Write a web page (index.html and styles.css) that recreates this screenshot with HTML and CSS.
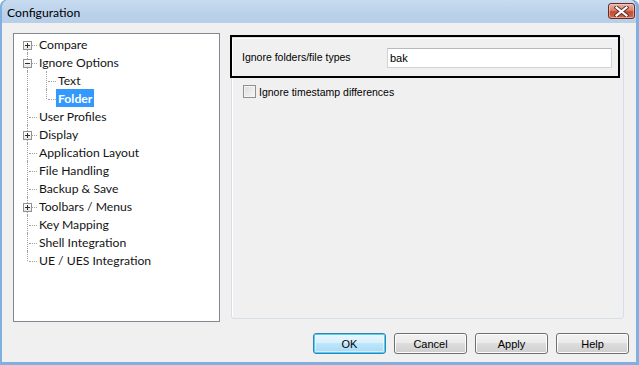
FILE: index.html
```html
<!DOCTYPE html>
<html>
<head>
<meta charset="utf-8">
<title>Configuration</title>
<link rel="stylesheet" href="styles.css">
</head>
<body>
<div class="window">
  <div class="titlebar">
    <span class="title">Configuration</span>
    <span class="close">
      <svg width="15" height="11" viewBox="0 0 15 11">
        <path d="M2.5 1.5 L12.5 9.5 M12.5 1.5 L2.5 9.5" stroke="#5a2a22" stroke-width="4" stroke-linecap="square"/>
        <path d="M2.5 1.5 L12.5 9.5 M12.5 1.5 L2.5 9.5" stroke="#ffffff" stroke-width="2.2" stroke-linecap="square"/>
      </svg>
    </span>
  </div>
  <div class="client">
    <div class="main">
      <div class="tree">
        <div class="row"><span class="g first"><span class="exp plus"></span></span><span class="lbl">Compare</span></div>
        <div class="row"><span class="g tee"><span class="exp minus"></span></span><span class="lbl">Ignore Options</span></div>
        <div class="row"><span class="g line"></span><span class="g l2 tee"></span><span class="lbl">Text</span></div>
        <div class="row"><span class="g line"></span><span class="g l2 last"></span><span class="lbl sel">Folder</span></div>
        <div class="row"><span class="g tee"></span><span class="lbl">User Profiles</span></div>
        <div class="row"><span class="g tee"><span class="exp plus"></span></span><span class="lbl">Display</span></div>
        <div class="row"><span class="g tee"></span><span class="lbl">Application Layout</span></div>
        <div class="row"><span class="g tee"></span><span class="lbl">File Handling</span></div>
        <div class="row"><span class="g tee"></span><span class="lbl">Backup &amp; Save</span></div>
        <div class="row"><span class="g tee"><span class="exp plus"></span></span><span class="lbl">Toolbars / Menus</span></div>
        <div class="row"><span class="g tee"></span><span class="lbl">Key Mapping</span></div>
        <div class="row"><span class="g tee"></span><span class="lbl">Shell Integration</span></div>
        <div class="row"><span class="g last"></span><span class="lbl">UE / UES Integration</span></div>
      </div>
      <div class="page">
        <div class="group">
          <div class="focus-rect">
            <span class="field-label">Ignore folders/file types</span>
            <span class="input">bak</span>
          </div>
          <div class="check-row">
            <span class="checkbox"></span>
            <span class="check-label">Ignore timestamp differences</span>
          </div>
        </div>
      </div>
    </div>
    <div class="buttons">
      <span class="btn default">OK</span>
      <span class="btn">Cancel</span>
      <span class="btn">Apply</span>
      <span class="btn">Help</span>
    </div>
  </div>
</div>
</body>
</html>
```
FILE: styles.css
```css
html, body {
  margin: 0;
  padding: 0;
  background: #ffffff;
}

.window {
  width: 639px;
  height: 365px;
  box-sizing: border-box;
  display: flex;
  flex-direction: column;
  background: #b9d1ea;
  border-left: 2px solid #7fb0df;
  border-right: 3px solid #7fb0df;
  border-bottom: 3px solid #7fb0df;
  box-shadow: inset 1px 0 0 #3b6ea3, inset -1px 0 0 #3b6ea3, inset 0 -1px 0 #3b6ea3;
  border-radius: 6px 6px 0 0;
  font-family: "Liberation Sans", Arial, sans-serif;
  font-size: 10.5px;
  color: #000;
}

.titlebar {
  height: 23px;
  flex: none;
  display: flex;
  align-items: center;
  justify-content: space-between;
  padding: 0 1px 0 5px;
  background: linear-gradient(#c9dcf0, #b9d1ea 60%, #b7cfe9);
  border-radius: 6px 6px 0 0;
}

.title {
  font-family: "Lato", "Open Sans", sans-serif;
  font-size: 12.2px;
  color: #000;
  margin-top: 1px;
}

.close {
  width: 27px;
  height: 16px;
  box-sizing: border-box;
  border: 1px solid #6b2b24;
  border-radius: 3px;
  background: linear-gradient(#e9b2a6, #d88570 45%, #c34a32 55%, #cf6a4e);
  box-shadow: inset 0 0 0 1px rgba(255, 220, 210, 0.5);
  display: flex;
  align-items: center;
  justify-content: center;
  margin-top: -1px;
}

.client {
  flex: 1;
  display: flex;
  flex-direction: column;
  background: #f0f0f0;
}

.main {
  display: flex;
  gap: 11px;
  padding: 10px 12px 0 11px;
}

.tree {
  width: 207px;
  height: 289px;
  box-sizing: border-box;
  border: 1px solid #828790;
  background: #fff;
  padding-top: 1px;
  font-family: "Lato", "Open Sans", sans-serif;
  font-size: 12.2px;
}

.row {
  display: flex;
  height: 18px;
}

.g {
  position: relative;
  width: 23px;
  flex: none;
}

.g.l2 {
  width: 19px;
}

.g::before {
  content: "";
  position: absolute;
  left: 13px;
  top: 0;
  bottom: 0;
  border-left: 1px dotted #a0a0a0;
}

.g.l2::before {
  left: 9px;
}

.g.first::before {
  top: 10px;
}

.g.last::before {
  bottom: 8px;
}

.g.tee::after,
.g.first::after,
.g.last::after {
  content: "";
  position: absolute;
  left: 15px;
  right: 0;
  top: 10px;
  border-top: 1px dotted #a0a0a0;
}

.g.l2.tee::after,
.g.l2.last::after {
  left: 11px;
}

.exp {
  position: absolute;
  left: 9px;
  top: 6px;
  width: 9px;
  height: 9px;
  box-sizing: border-box;
  border: 1px solid #919191;
  background: linear-gradient(#ffffff, #e6e6e6);
  z-index: 1;
}

.exp::before {
  content: "";
  position: absolute;
  left: 1px;
  top: 3px;
  width: 5px;
  height: 1px;
  background: #2e2e2e;
}

.exp.plus::after {
  content: "";
  position: absolute;
  left: 3px;
  top: 1px;
  width: 1px;
  height: 5px;
  background: #2e2e2e;
}

.lbl {
  line-height: 19px;
  height: 18px;
  padding: 0 2px;
  white-space: nowrap;
  color: #141414;
}

.lbl.sel {
  background: #3399ff;
  color: #fff;
  font-weight: bold;
}

.page {
  flex: 1;
  padding-top: 4px;
  padding-bottom: 3px;
  display: flex;
}

.group {
  flex: 1;
  border: 1px solid #d5dfe5;
  border-radius: 3px;
  box-shadow: inset 1px 1px 0 #ffffff;
}

.focus-rect {
  display: flex;
  align-items: flex-start;
  margin: -3px 3px 0 -2px;
  height: 43px;
  box-sizing: border-box;
  border: 2px solid #000;
  padding: 11px 6px 0 10px;
}

.field-label {
  flex: 1;
  line-height: 14px;
  margin-top: 2px;
  white-space: nowrap;
}

.input {
  width: 225px;
  height: 20px;
  box-sizing: border-box;
  border: 1px solid #cfd3d8;
  border-top-color: #b5b9be;
  background: #fff;
  padding-left: 2px;
  line-height: 18px;
  font-size: 11px;
}

.check-row {
  display: flex;
  align-items: center;
  margin: 7px 0 0 11px;
  gap: 3px;
}

.checkbox {
  width: 13px;
  height: 13px;
  box-sizing: border-box;
  border: 1px solid #8e8f8f;
  background: linear-gradient(135deg, #dcdcdc, #f7f7f7);
  box-shadow: inset 0 0 0 1px #f4f4f4;
}

.check-label {
  white-space: nowrap;
}

.buttons {
  display: flex;
  justify-content: flex-end;
  gap: 8px;
  margin-top: 11px;
  padding-right: 7px;
}

.btn {
  width: 73px;
  height: 21px;
  box-sizing: border-box;
  border: 1px solid #707070;
  border-radius: 3px;
  background: linear-gradient(#f2f2f2, #ebebeb 45%, #dddddd 50%, #cfcfcf);
  box-shadow: inset 0 0 0 1px #fcfcfc;
  display: flex;
  align-items: center;
  justify-content: center;
  color: #000;
  font-size: 11px;
}

.btn.default {
  border-color: #3c7fb1;
  background: linear-gradient(#eaf6fd, #d9f0fc 45%, #bee6fd 50%, #a7d9f5);
  box-shadow: inset 0 0 0 1px #48d4f7, inset 0 0 0 2px rgba(255,255,255,0.5);
}
```
